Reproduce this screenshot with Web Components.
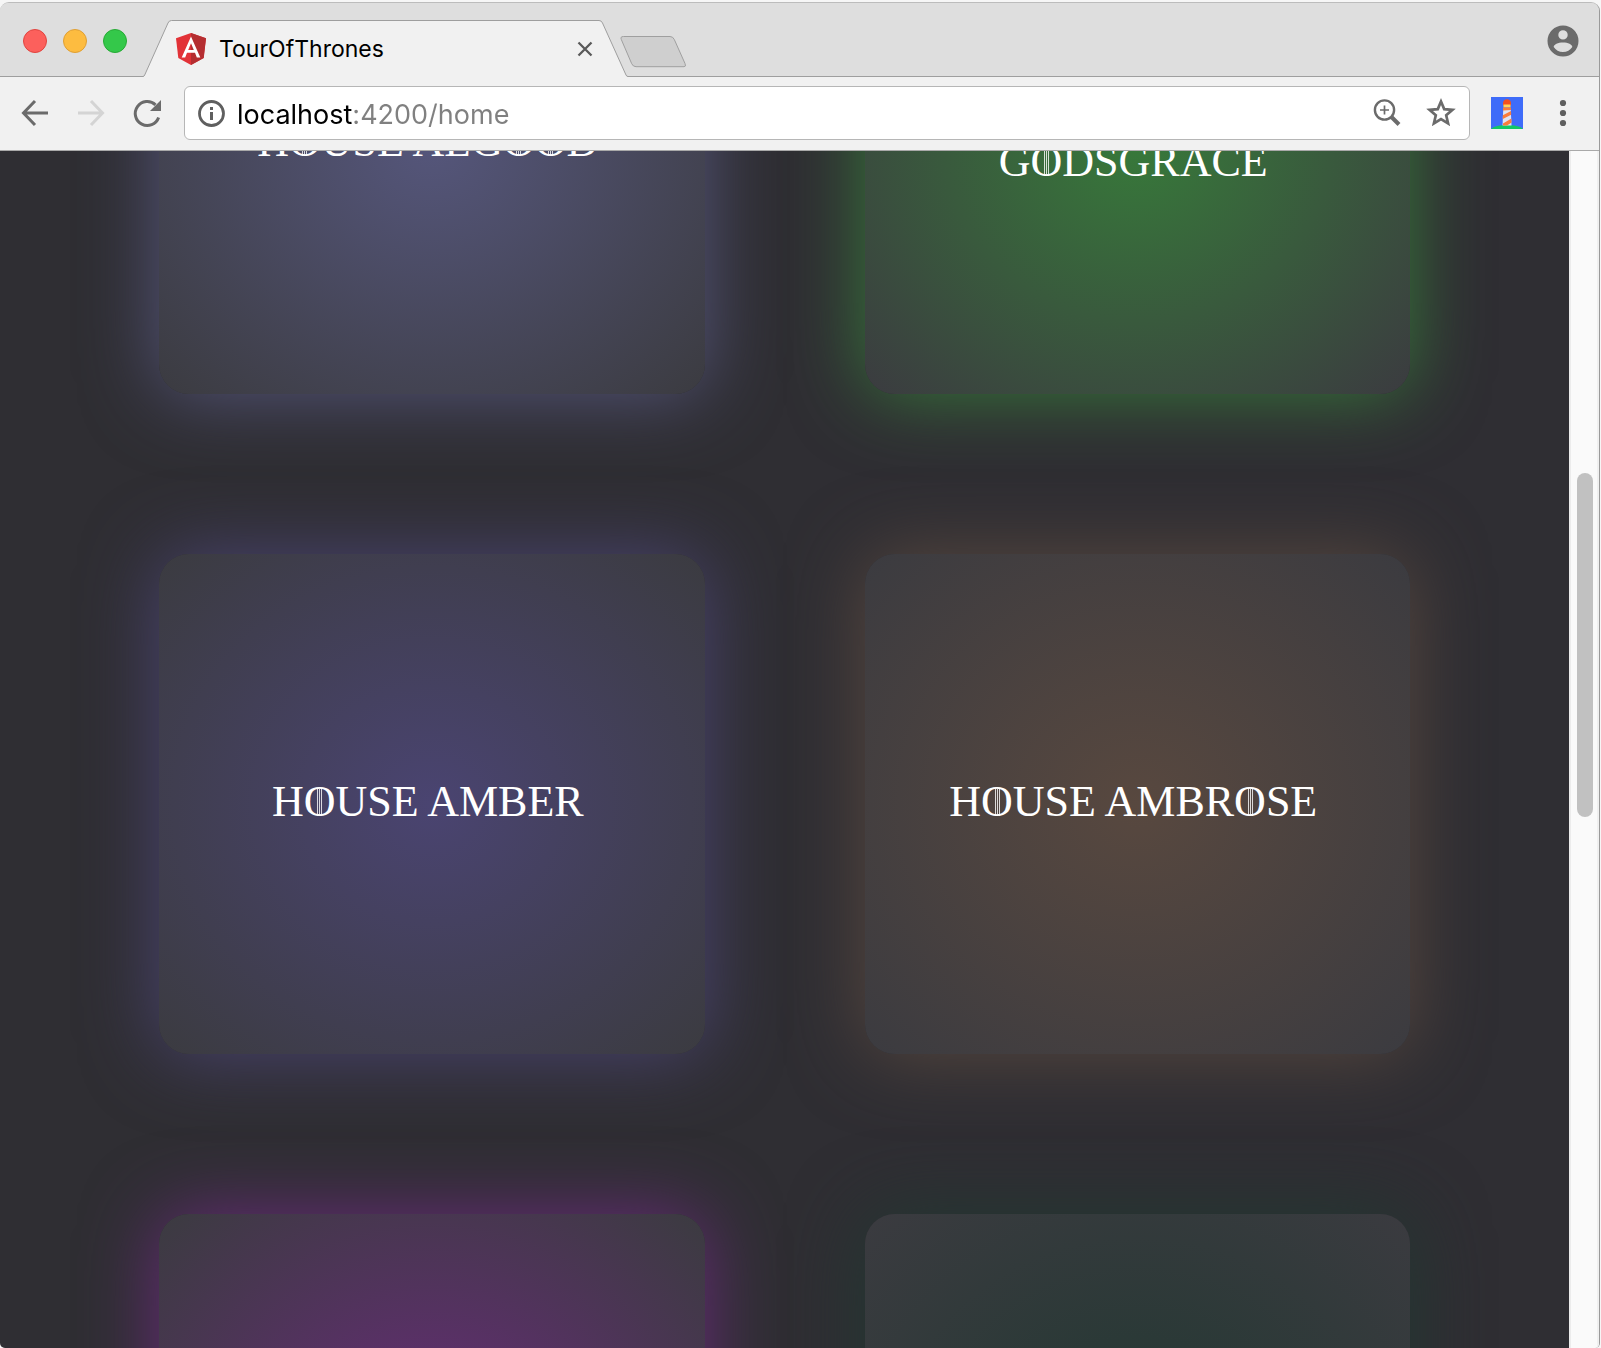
<!DOCTYPE html>
<html lang="en">
<head>
<meta charset="utf-8">
<title>TourOfThrones</title>
<style>
  html, body { margin: 0; height: 100%; background: #f6f6f6; }
  body { font-family: Inter, "Liberation Sans", sans-serif; overflow: hidden; }
</style>
</head>
<body>
<browser-window>
  <tab-strip slot="tabs"><browser-tab>TourOfThrones</browser-tab></tab-strip>
  <tool-bar slot="toolbar"></tool-bar>
  <house-list>
    <house-card style="--house:#55567b">HOUSE ALGOOD</house-card>
    <house-card style="--house:#37793a">HOUSE ALLYRION OF GODSGRACE</house-card>
    <house-card style="--house:#4a4471">HOUSE AMBER</house-card>
    <house-card style="--house:#58483f">HOUSE AMBROSE</house-card>
    <house-card style="--house:#682b79"></house-card>
    <house-card style="--house:#223832"></house-card>
  </house-list>
</browser-window>

<script>
const define = (name, html, ready) => customElements.define(name, class extends HTMLElement {
  constructor() {
    super();
    this.attachShadow({ mode: 'open' }).innerHTML = html;
  }
  connectedCallback() { if (ready) ready(this, this.shadowRoot); }
});

define('browser-window', `
<style>
  :host { display: flex; flex-direction: column; box-sizing: border-box; height: calc(100vh - 2px);
    margin: 2px 1px 0 0; border-top: 1px solid #bcbcbc; border-right: 1px solid #9a9a9a;
    border-radius: 9px 9px 5px 5px; overflow: hidden; background: #dedede; }
  main { flex: 1; min-height: 0; display: flex; }
  .page { flex: 1; min-width: 0; overflow: hidden; background: #2f2e33; }
</style>
<slot name="tabs"></slot>
<slot name="toolbar"></slot>
<main><div class="page"><slot></slot></div><scroll-track></scroll-track></main>`);

define('scroll-track', `
<style>
  :host { display: block; box-sizing: border-box; width: 30px; background: #fafafa;
    border-left: 2px solid #ececec; border-right: 2px solid #f0f0f0; padding: 322px 4px 0 6px; }
  div { height: 344px; border-radius: 8px; background: #c1c1c1; }
</style>
<div></div>`);

define('tab-strip', `
<style>
  :host { display: flex; align-items: center; box-sizing: border-box; height: 74px; flex: none;
    padding: 2px 20px 0 23px; gap: 16px; background: #dedede; box-shadow: inset 0 -1px #9e9e9e; }
  button { border: 0; padding: 0; background: none; display: block; }
  .light { box-sizing: border-box; width: 24px; height: 24px; border-radius: 50%; }
  .red { background: #fc605c; border: 1px solid #e0443f; }
  .yellow { background: #fdbc40; border: 1px solid #df9f34; }
  .green { background: #34c84a; border: 1px solid #27aa35; }
  .tabs { display: flex; align-items: flex-end; height: 100%; }
  .new { margin: 0 0 8px -9px; }
  .user { margin-left: auto; }
  svg { display: block; }
</style>
<button class="light red" aria-label="Close window"></button>
<button class="light yellow" aria-label="Minimise"></button>
<button class="light green" aria-label="Zoom window"></button>
<div class="tabs"><slot></slot>
  <button class="new" aria-label="New tab"><svg width="68" height="34" viewBox="0 0 68 34">
    <path d="M4.500 1.500H51q3 0 4.300 3L66 28.500Q67.500 31.700 65 31.700H17q-3 0-4.300-3L2.300 4.500Q1 1.500 4.500 1.500Z" fill="#cfcfcf" stroke="#9f9f9f"/></svg></button>
</div>
<button class="user" aria-label="Profile"><svg width="32" height="32" viewBox="0 0 32 32">
  <path fill="#6b6b6b" fill-rule="evenodd" d="M16 .5a15.500 15.500 0 1 0 0 31a15.500 15.500 0 1 0 0-31ZM16 5.200a4.700 4.700 0 1 1 0 9.400a4.700 4.700 0 1 1 0-9.400ZM16 17.500c5 0 9.300 2 9.300 4.500c-2 3-5.400 5-9.300 5s-7.300-2-9.300-5c0-2.500 4.300-4.500 9.300-4.500Z"/></svg></button>`);

define('browser-tab', `
<style>
  :host { display: flex; align-items: center; box-sizing: border-box; position: relative; isolation: isolate;
    width: 485px; height: 57px; padding: 0 27px 0 33px; gap: 13px; font-size: 23px; line-height: 32px; color: #000; }
  .shape { position: absolute; inset: 0; z-index: -1; }
  .title { flex: 1; white-space: nowrap; }
  button { border: 0; padding: 0; background: none; width: 32px; height: 32px; }
  svg { display: block; }
</style>
<svg class="shape" width="485" height="57" viewBox="0 0 485 57">
  <path d="M0 57V56.500Q1 56.500 1.700 55L25 3Q26 .5 28.500 .5H456Q458.500 .5 459.500 3L483 55Q483.700 56.500 485 56.500V57Z" fill="#f1f1f1"/>
  <path d="M0 56.500Q1 56.500 1.700 55L25 3Q26 .5 28.500 .5H456Q458.500 .5 459.500 3L483 55Q483.700 56.500 485 56.500" fill="none" stroke="#9e9e9e"/></svg>
<svg width="30" height="32" viewBox="0 0 30 32">
  <path d="M15 0L0 5.300L2.300 25L15 32L27.700 25L30 5.300Z" fill="#e23237"/>
  <path d="M15 0V32L27.700 25L30 5.300Z" fill="#b52e31"/>
  <path d="M15 3.600L5.700 24.500H9.200L11 19.800H19L20.800 24.500H24.300ZM15 10.300L17.800 16.900H12.200Z" fill="#fff" fill-rule="evenodd"/></svg>
<span class="title"><slot></slot></span>
<button aria-label="Close tab"><svg width="32" height="32" viewBox="0 0 32 32">
  <path d="M9.500 9.500L22.500 22.500M22.500 9.500L9.500 22.500" stroke="#5a5a5a" stroke-width="2.300"/></svg></button>`);

define('tool-bar', `
<style>
  :host { display: flex; align-items: center; box-sizing: border-box; height: 74px; flex: none;
    gap: 21px; padding: 0 20px 1px 19px; background: #f1f1f1; border-bottom: 1px solid #a9a9a9; }
  nav, .actions { display: flex; gap: 24px; align-items: center; }
  button { border: 0; padding: 0; background: none; width: 32px; height: 32px; flex: none; }
  svg { display: block; }
  form { flex: 1; min-width: 0; display: flex; align-items: center; box-sizing: border-box; height: 54px;
    margin: 0; padding: 0 12px 0 10px; background: #fff; border: 1px solid #b6b6b6; border-radius: 6px; }
  form button + button { margin-left: 22px; }
  input { flex: 1; min-width: 0; border: 0; outline: 0; padding: 2px 0 0; margin: 0 22px 0 10px; height: 44px;
    font: 27px/42px Inter, "Liberation Sans", sans-serif; color: #808080;
    background: linear-gradient(90deg, #000 var(--host-end, 118px), #808080 0); background-clip: text;
    -webkit-background-clip: text; -webkit-text-fill-color: transparent; }
</style>
<nav>
  <button aria-label="Back"><svg width="32" height="32" viewBox="0 0 32 32" fill="none" stroke="#6b6b6b" stroke-width="3"><path d="M16 4L4.500 16L16 28M4.500 16H29"/></svg></button>
  <button aria-label="Forward" disabled><svg width="32" height="32" viewBox="0 0 32 32" fill="none" stroke="#d4d4d4" stroke-width="3"><path d="M16 4L27.500 16L16 28M27.500 16H3"/></svg></button>
  <button aria-label="Reload"><svg width="32" height="32" viewBox="0 0 32 32"><path d="M27.600 20.500A12 12 0 1 1 24.500 7.800" fill="none" stroke="#6b6b6b" stroke-width="3"/><path d="M30 3V14H19Z" fill="#6b6b6b"/></svg></button>
</nav>
<form>
  <button type="button" aria-label="Site information"><svg width="32" height="32" viewBox="0 0 32 32"><circle cx="16.500" cy="16.500" r="12" fill="none" stroke="#5f5f5f" stroke-width="2.800"/><path d="M15 10h3v3h-3zM15 15h3v8h-3z" fill="#5f5f5f"/></svg></button>
  <input type="text" aria-label="Address" value="localhost:4200/home" spellcheck="false">
  <button type="button" aria-label="Zoom"><svg width="32" height="32" viewBox="0 0 32 32" fill="none" stroke="#6b6b6b"><circle cx="13.500" cy="13" r="9.600" stroke-width="2.400"/><path d="M13.500 8.500v9M9 13h9" stroke-width="1.700"/><path d="M20.500 20L28 27.500" stroke-width="4"/></svg></button>
  <button type="button" aria-label="Bookmark"><svg width="32" height="32" viewBox="0 0 32 32"><path d="M16 4.500L19.200 12.100L27.500 12.800L21.200 18.300L23.100 26.400L16 22.100L8.900 26.400L10.800 18.300L4.500 12.800L12.800 12.100Z" fill="none" stroke="#6b6b6b" stroke-width="2.700"/></svg></button>
</form>
<div class="actions">
  <button aria-label="Lighthouse"><svg width="32" height="32" viewBox="0 0 32 32">
    <path fill="#3f6cf9" d="M0 0h32v32H0z"/>
    <path fill="#12c765" d="M0 32C3 29 9 28 16 28s13 1 16 4Z"/>
    <path fill="#e0e3f2" d="M12.300 11h7.400l.8 17.500h-9z"/>
    <path fill="#f4511e" d="M12 6Q12.500 2.300 16 2.300T20 6V8.500H12z"/>
    <path fill="#ffd45a" d="M12.500 7.500h7v3h-7z"/>
    <path fill="#fb7c3c" d="M12 10.500h8v2.500l-8 .5zM20 14l.2 3.800-8.400 4.200V18.300zM20.400 21.500l.2 4-4.600 3h-4v-2z"/></svg></button>
  <button aria-label="Menu"><svg width="32" height="32" viewBox="0 0 32 32" fill="#5f5f5f"><circle cx="16" cy="6" r="3.100"/><circle cx="16" cy="16" r="3.100"/><circle cx="16" cy="26" r="3.100"/></svg></button>
</div>`, (el, root) => {
  // The host name is black and the rest of the address grey, so find where the host ends.
  const pen = document.createElement('canvas').getContext('2d');
  const input = root.querySelector('input');
  pen.font = '27px Inter, "Liberation Sans", sans-serif';
  input.style.setProperty('--host-end', Math.round(pen.measureText('localhost').width) + 'px');
});

define('house-list', `
<style>
  :host { display: grid; grid-template-columns: 1fr 1fr; gap: 160px; padding: 0 159px;
    margin-top: -257px; }
</style>
<slot></slot>`);

define('house-card', `
<style>
  :host { display: flex; align-items: center; justify-content: center; box-sizing: border-box; position: relative;
    height: 500px; padding: 0 40px; border-radius: 30px;
    background: radial-gradient(var(--house), #3b3b40);
    box-shadow: 0 0 74px var(--house); }
  h2 { margin: 0; padding: 0 8px 4px 0; font: 44px/40px "Liberation Serif", serif; color: #fff; text-align: center; }
  i { position: absolute; width: 5px; height: 27px; opacity: .8;
    background: linear-gradient(90deg, #fff 1px, transparent 1px 2px, #fff 2px 3px, transparent 3px 4px, #fff 4px); }
</style>
<h2><slot></slot></h2>`, (el, root) => {
  // Every O carries three fine strokes through its counter.
  const strokes = () => {
    root.querySelectorAll('i').forEach(i => i.remove());
    const box = el.getBoundingClientRect();
    for (const node of el.childNodes) {
      if (node.nodeType !== 3) continue;
      [...node.data].forEach((letter, at) => {
        if (letter !== 'O') return;
        const range = document.createRange();
        range.setStart(node, at);
        range.setEnd(node, at + 1);
        const r = range.getBoundingClientRect();
        const mark = document.createElement('i');
        mark.style.left = Math.round(r.left + r.width / 2 - box.left - 2.5) + 'px';
        mark.style.top = Math.round(r.top + r.height / 2 - box.top - 13) + 'px';
        root.append(mark);
      });
    }
  };
  strokes();
  new ResizeObserver(strokes).observe(el);
});
</script>
</body>
</html>
